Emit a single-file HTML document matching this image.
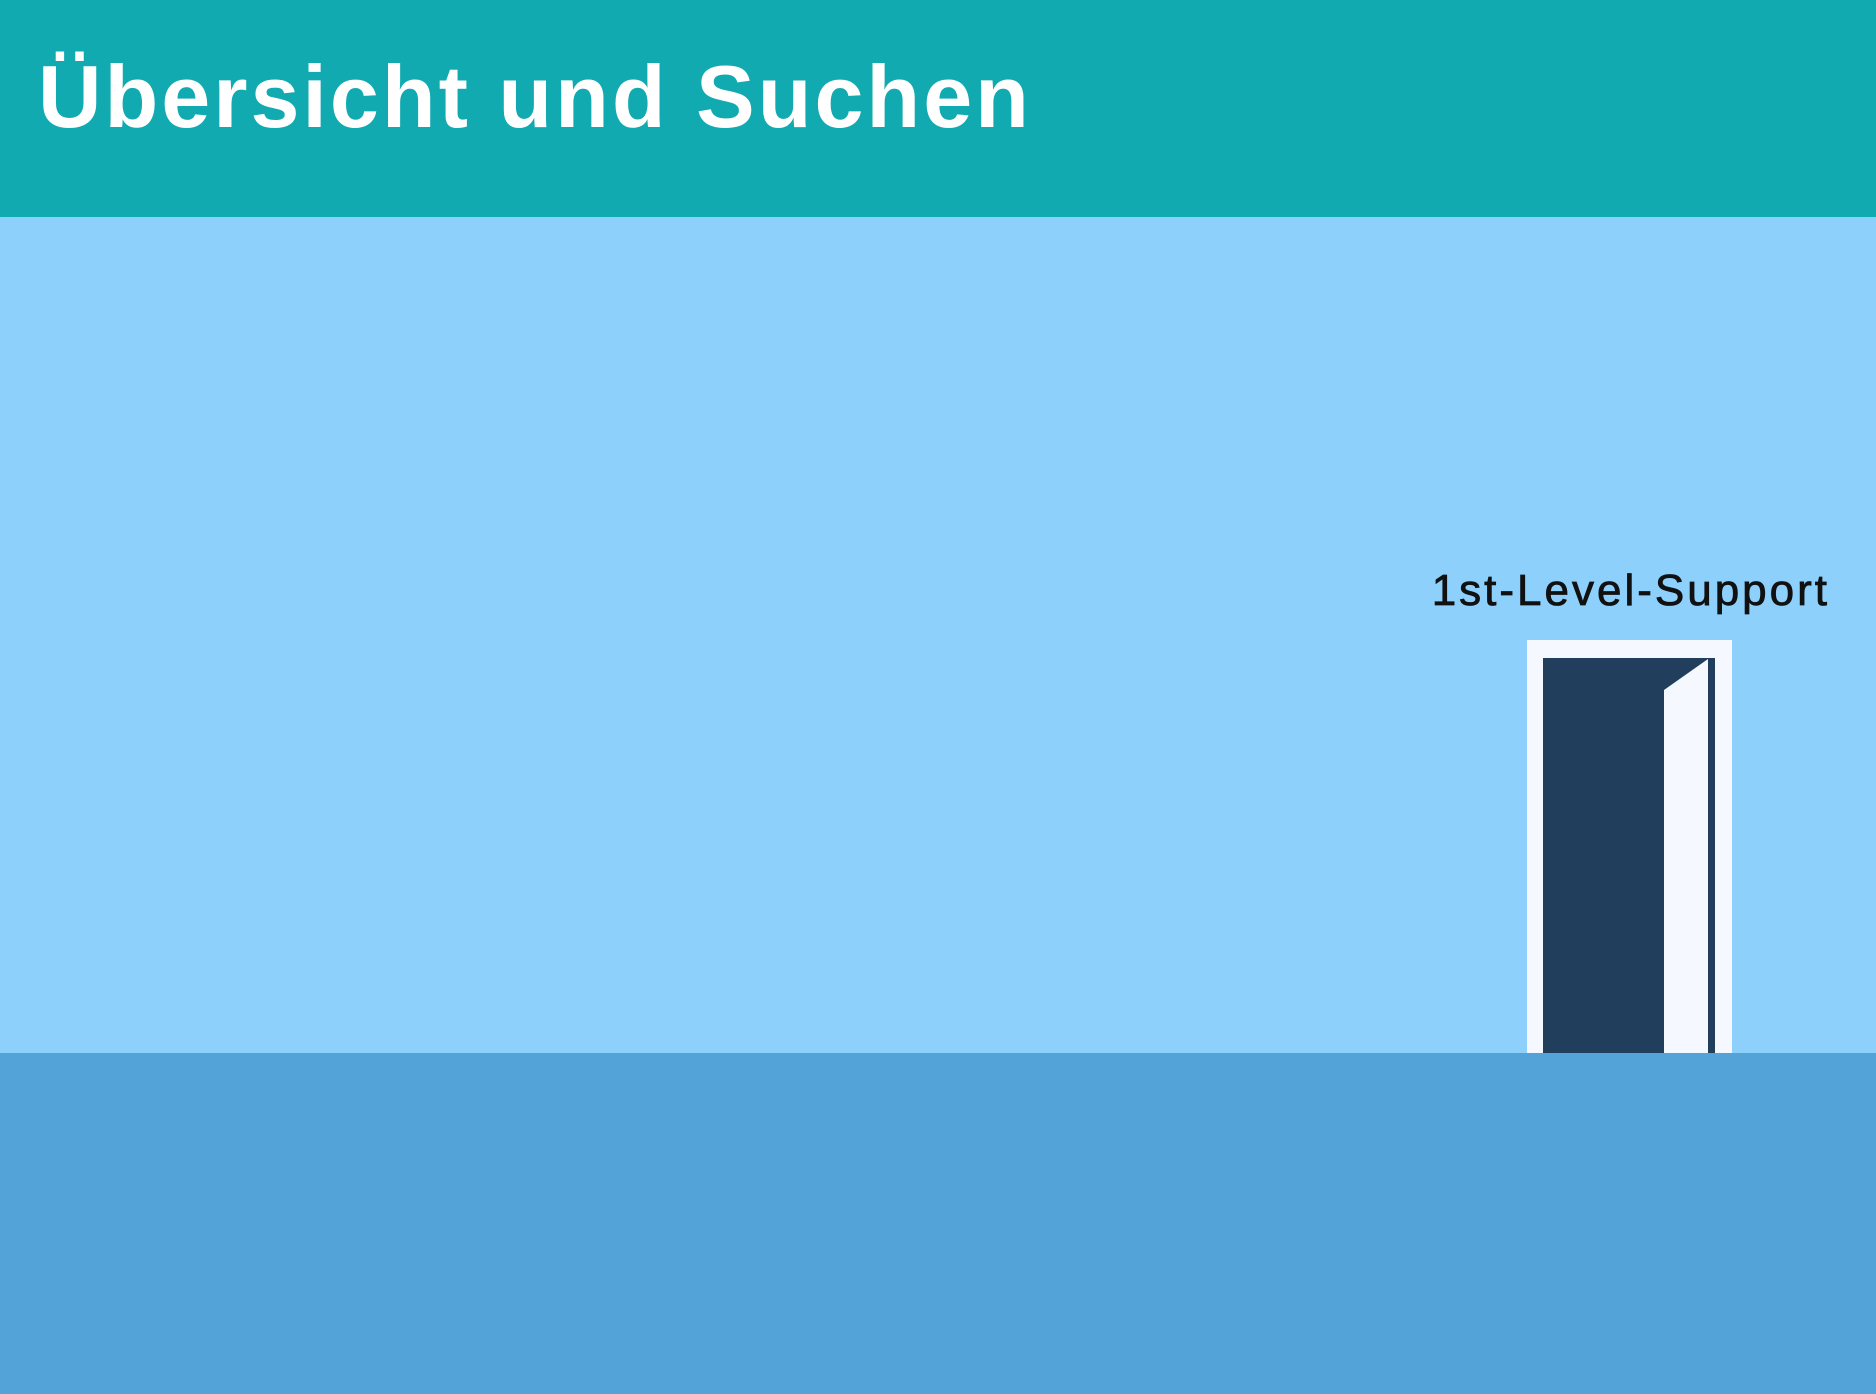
<!DOCTYPE html>
<html><head><meta charset="utf-8"><style>
html,body{margin:0;padding:0}
body{width:1876px;height:1394px;position:relative;overflow:hidden;background:#8dd0fc;font-family:"Liberation Sans",sans-serif}
.hdr{position:absolute;left:0;top:0;width:1876px;height:217px;background:#11aab1}
.hdr h1{position:absolute;left:38px;top:47px;margin:0;font-size:88px;font-weight:bold;color:#fff;line-height:100px;letter-spacing:3px}
.ground{position:absolute;left:0;top:1053px;width:1876px;height:341px;background:#53a3d8}
.lbl{position:absolute;right:46px;top:566px;font-size:44px;color:#111;letter-spacing:3px;line-height:50px;-webkit-text-stroke:0.8px #111}
</style></head><body>
<div class="hdr"><h1>Übersicht und Suchen</h1></div>
<div class="lbl">1st-Level-Support</div>
<svg style="position:absolute;left:0;top:0" width="1876" height="1394">
<rect x="1527" y="640" width="205" height="414" fill="#f5f9ff"/>
<rect x="1543" y="658" width="172" height="396" fill="#213f5c"/>
<polygon points="1664,690 1708,659 1708,1054 1664,1054" fill="#f5f9ff"/>
</svg>
<div class="ground"></div>
</body></html>
